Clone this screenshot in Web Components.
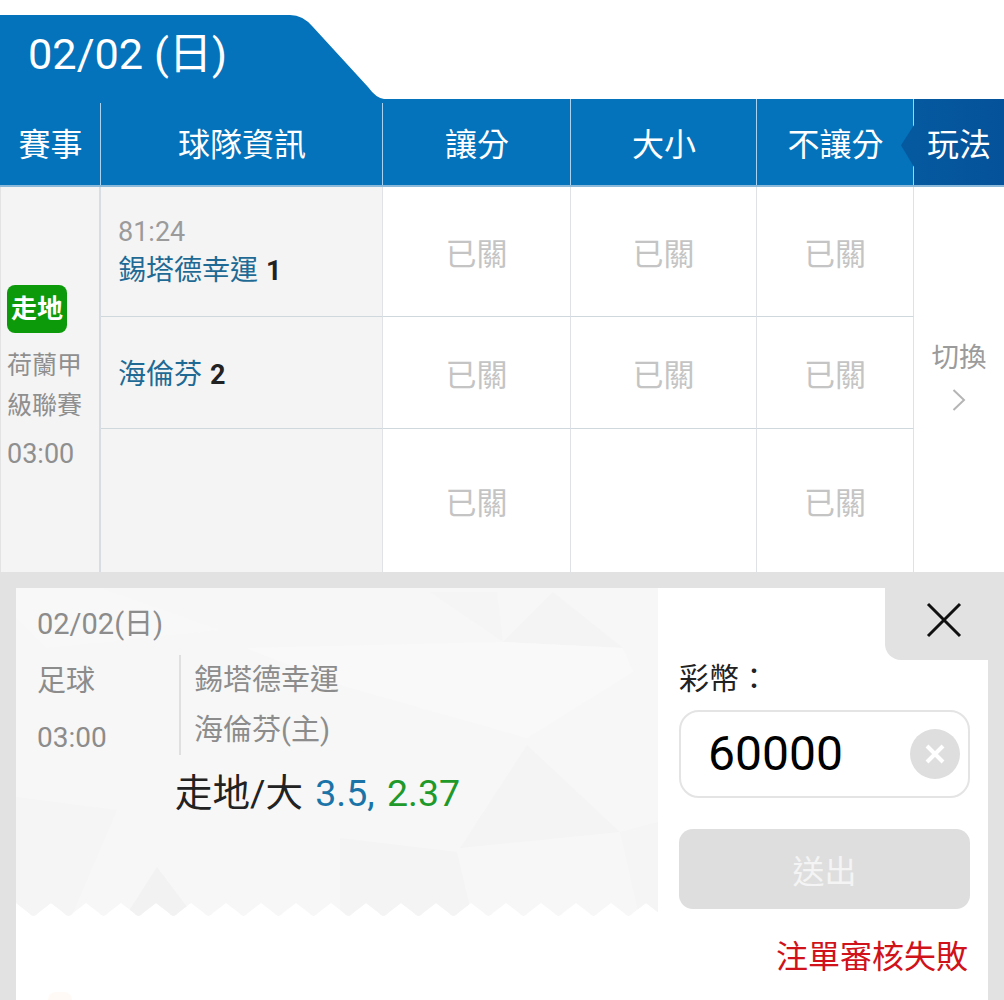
<!DOCTYPE html>
<html lang="zh-Hant">
<head>
<meta charset="utf-8">
<title>02/02</title>
<style>
  html, body { margin: 0; background: #fff; }
  body { width: 1004px; height: 1000px; overflow: hidden; font-family: Roboto, "Noto Sans CJK TC", sans-serif; }
</style>
</head>
<body>
<x-date-tab>02/02 (日)</x-date-tab>
<x-match-table>
  <x-head-cell first>賽事</x-head-cell>
  <x-head-cell first>球隊資訊</x-head-cell>
  <x-head-cell>讓分</x-head-cell>
  <x-head-cell>大小</x-head-cell>
  <x-head-cell>不讓分</x-head-cell>
  <x-head-cell play>玩法</x-head-cell>

  <x-league-cell time="03:00">荷蘭甲<br>級聯賽</x-league-cell>

  <x-team-cell clock="81:24" name="錫塔德幸運" score="1"></x-team-cell>
  <x-odd-cell>已關</x-odd-cell>
  <x-odd-cell>已關</x-odd-cell>
  <x-odd-cell>已關</x-odd-cell>
  <x-switch-cell>切換</x-switch-cell>

  <x-team-cell name="海倫芬" score="2"></x-team-cell>
  <x-odd-cell>已關</x-odd-cell>
  <x-odd-cell>已關</x-odd-cell>
  <x-odd-cell>已關</x-odd-cell>

  <x-team-cell last></x-team-cell>
  <x-odd-cell last>已關</x-odd-cell>
  <x-odd-cell last></x-odd-cell>
  <x-odd-cell last>已關</x-odd-cell>
</x-match-table>
<x-bet-panel>
  <x-ticket></x-ticket>
  <x-stake-form></x-stake-form>
</x-bet-panel>

<script>
function define(name, css, html, setup) {
  customElements.define(name, class extends HTMLElement {
    connectedCallback() {
      if (this.shadowRoot) return;
      const root = this.attachShadow({ mode: 'open' });
      root.innerHTML = '<style>' + css + '</style>' + (typeof html === 'function' ? html(this) : html);
      if (setup) setup(this, root);
    }
  });
}

function ticketEdge() {
  let d = 'M0 0 H642 V315';
  for (let x = 630; x >= 0; x -= 35) {
    d += ` L${x + 22} 325 Q${x + 17.5} 331 ${x + 13} 325 L${x} 315`;
  }
  return d + ' V0 Z';
}

define('x-date-tab', `
  :host { display: block; margin-top: 15px; height: 84px; box-sizing: border-box; padding: 0 0 0 28px;
    background: #0473bb; color: #fff; font-size: 43.3px; line-height: 80px;
    clip-path: path("M1 0 H290 Q303 0 313 12 L368 72 Q376 83 384 84 H0 V0 Z"); }
`, '<slot></slot>');

define('x-match-table', `
  :host { display: grid; grid-template-columns: 101px 282px 188px 186px 157px 90px; grid-template-rows: 88px 130px 112px 143px; }
`, '<slot></slot>');

define('x-head-cell', `
  :host { display: flex; align-items: center; justify-content: center; position: relative; box-sizing: border-box;
    background: #0473bb; color: #fff; font-size: 32px; border-bottom: 2px solid #8ab9d9; }
  :host::after { content: ""; position: absolute; right: 0; top: 0; bottom: 0; width: 1px; background: #a9d2ee; }
  :host([first])::after { top: 4px; }
  :host([play]) { background: linear-gradient(90deg, #05599f, #04529a); }
  :host([play])::after { display: none; }
  :host([play])::before { content: ""; position: absolute; left: -13px; top: 26px; width: 13px; height: 42px;
    background: #05599f; clip-path: polygon(100% 0, 0 48%, 100% 100%); }
`, '<slot></slot>');

define('x-league-cell', `
  :host { display: flex; flex-direction: column; justify-content: center; align-items: flex-start; grid-row: 2 / span 3;
    box-sizing: border-box; background: #f4f4f5; border-right: 2px solid #d8dde3; border-left: 1px solid #e3e3e3; padding: 0 0 1px 6px;
    color: #8f8f8f; font-size: 25px; line-height: 40px; }
  .badge { width: 60px; height: 48px; border-radius: 8px; background: #0d9a0a; color: #fff; font-size: 26px; font-weight: 700;
    display: flex; align-items: center; justify-content: center; margin-bottom: 13px; line-height: 1; }
  .time { font-size: 27px; margin-top: 8px; line-height: 40px; }
`, el => `<div class="badge">走地</div><div class="name"><slot></slot></div><div class="time">${el.getAttribute('time')}</div>`);

define('x-team-cell', `
  :host { display: flex; flex-direction: column; justify-content: center; box-sizing: border-box; background: #f4f4f5;
    padding: 0 0 0 17px; border-right: 1px solid #e0e3e6; border-bottom: 1px solid #cfd8dd; }
  :host([last]) { border-bottom: 0; }
  .clock { color: #9b9b9b; font-size: 27px; line-height: 38px; margin-bottom: 1px; }
  .team { color: #1f6a94; font-size: 28px; line-height: 38px; }
  .team.single { padding-top: 4px; }
  b { color: #222; font-size: 27px; font-weight: 700; margin-left: 1px; }
`, el => {
  const c = el.getAttribute('clock'), n = el.getAttribute('name');
  return (c ? `<div class="clock">${c}</div>` : '') + (n ? `<div class="team${c ? '' : ' single'}">${n} <b>${el.getAttribute('score')}</b></div>` : '');
});

define('x-odd-cell', `
  :host { display: flex; align-items: center; justify-content: center; box-sizing: border-box; background: #fff;
    color: #c4c4c4; font-size: 31px; padding-bottom: 1px; border-right: 1px solid #dfe2e5; border-bottom: 1px solid #cfd8dd; }
  :host([last]) { border-bottom: 0; }
`, '<slot></slot>');

define('x-switch-cell', `
  :host { display: flex; flex-direction: column; align-items: center; justify-content: center; grid-column: 6; grid-row: 2 / span 3;
    background: #fff; color: #9b9b9b; font-size: 27.5px; line-height: 40px; padding-bottom: 9px; box-sizing: border-box; }
  svg { display: block; margin-top: 10px; }
`, '<slot></slot><svg width="14" height="24" viewBox="0 0 14 24" fill="none" stroke="#b5b5b5" stroke-width="2"><path d="M1.5 2 L12 12 L1.5 22"/></svg>');

define('x-bet-panel', `
  :host { display: grid; grid-template-columns: 642px 330px; position: relative; box-sizing: border-box; height: 428px;
    padding: 16px 16px 0 16px; background: #e2e2e2; overflow: hidden; }
  .close { position: absolute; right: 16px; top: 16px; width: 103px; height: 72px; background: #e2e2e2; border-radius: 0 0 0 16px;
    display: flex; align-items: center; justify-content: center; }
  .close svg { display: block; margin: -8px 0 0 15px; }
`, `<slot></slot><div class="close"><svg width="36" height="36" viewBox="0 0 36 36" stroke="#111" stroke-width="3" fill="none"><path d="M2 2 L34 34 M34 2 L2 34"/></svg></div>`);

define('x-ticket', `
  :host { display: block; position: relative; background: #fff; color: #8c8c8c; font-size: 29px; }
  svg.bg { position: absolute; left: 0; top: 0; width: 642px; height: 332px; }
  .dot { position: absolute; left: 32px; bottom: 0; width: 24px; height: 8px; border-radius: 12px 12px 0 0; background: #fffaf6; }
  .content { position: relative; box-sizing: border-box; padding: 15px 0 0 21px; }
  .date { line-height: 42px; }
  .info { display: flex; margin-top: 10px; height: 100px; }
  .meta { width: 142px; box-sizing: border-box; }
  .meta div { height: 50px; line-height: 50px; }
  .meta .s { margin-top: 1px; }
  .meta .t { font-size: 28px; margin-top: 7px; }
  .teams { border-left: 2px solid #e0e0e0; padding-left: 13px; }
  .teams div { line-height: 50px; height: 50px; }
  .pick { margin: 15px 0 0 138px; color: #222; font-size: 37.5px; line-height: 46px; word-spacing: 3px; }
  .blue { color: #1a74a8; } .green { color: #1f9a2a; }
`, () => `<svg class="bg" viewBox="0 0 642 332" aria-hidden="true">
  <defs><clipPath id="edge"><path d="${ticketEdge()}"/></clipPath></defs>
  <g clip-path="url(#edge)">
    <rect width="642" height="332" fill="#f7f7f7"/>
    <polygon points="0,0 84,0 204,42 30,60 0,30" fill="#f8f8f8"/>
    <polygon points="414,4 481,4 487,54" fill="#f5f5f5"/>
    <polygon points="487,54 537,4 607,60" fill="#f4f4f4"/>
    <polygon points="230,60 487,54 607,60 617,84 511,150 324,97" fill="#f9f9f9"/>
    <polygon points="511,157 604,244 444,260" fill="#f4f4f4"/>
    <polygon points="604,244 642,234 642,332 624,332" fill="#f5f5f5"/>
    <polygon points="0,209 101,222 54,332 0,332" fill="#f5f5f5"/>
    <polygon points="141,279 181,332 107,332" fill="#f2f2f2"/>
    <polygon points="324,250 441,264 457,332 324,332" fill="#f4f4f4"/>
  </g>
</svg>
<div class="dot"></div>
<div class="content">
  <div class="date">02/02(日)</div>
  <div class="info">
    <div class="meta"><div class="s">足球</div><div class="t">03:00</div></div>
    <div class="teams"><div>錫塔德幸運</div><div>海倫芬(主)</div></div>
  </div>
  <div class="pick">走地/大 <span class="blue">3.5,</span> <span class="green">2.37</span></div>
</div>`);

define('x-stake-form', `
  :host { display: block; background: #fff; box-sizing: border-box; padding: 66px 18px 0 21px; color: #222; }
  .label { font-size: 30px; line-height: 50px; height: 56px; }
  .input { display: flex; align-items: center; justify-content: space-between; box-sizing: border-box; height: 88px;
    border: 2px solid #e4e4e4; border-radius: 20px; padding: 0 8px 0 27px; }
  .val { font-size: 48px; color: #000; line-height: 1; }
  .clear { width: 50px; height: 50px; border-radius: 50%; background: #dedede; display: flex; align-items: center; justify-content: center; }
  .clear svg { display: block; }
  .send { margin-top: 31px; height: 80px; border-radius: 14px; background: #dedede; color: #f4f4f4; font-size: 32px;
    display: flex; align-items: center; justify-content: center; box-sizing: border-box; }
  .err { margin-top: 24px; text-align: right; color: #d0121b; font-size: 32px; line-height: 48px; margin-right: 2px; }
`, `<div class="label">彩幣：</div>
<div class="input"><span class="val">60000</span><span class="clear"><svg width="22" height="22" viewBox="0 0 22 22" stroke="#fff" stroke-width="4" fill="none"><path d="M3 3 L19 19 M19 3 L3 19"/></svg></span></div>
<div class="send">送出</div>
<div class="err">注單審核失敗</div>`);
</script>
</body>
</html>
